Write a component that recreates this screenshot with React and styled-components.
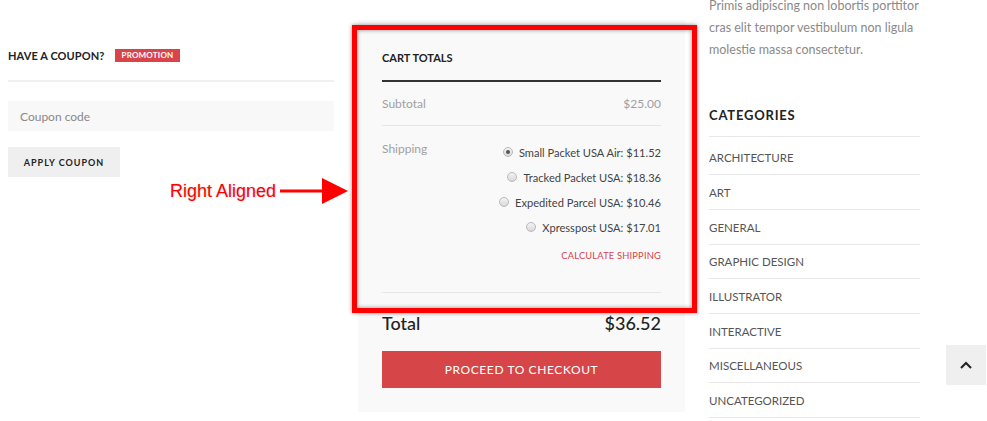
import React from "react";
import styled, { createGlobalStyle } from "styled-components";

const Global = createGlobalStyle`
  html, body { margin: 0; padding: 0; background: #fff; }
  body { font-family: Lato, "Open Sans", sans-serif; overflow: hidden; }
  * { box-sizing: border-box; }
`;

const Page = styled.div`
  position: relative;
  width: 987px;
  height: 421px;
  overflow: hidden;
  display: flex;
  align-items: flex-start;
  gap: 24px;
  padding-left: 8px;
`;

const LeftCol = styled.div`
  width: 326px;
  display: flex;
  flex-direction: column;
`;

const CouponHeader = styled.div`
  display: flex;
  align-items: center;
  gap: 10px;
  padding: 45px 0 15px;
  border-bottom: 2px solid #f0f0f0;
  height: 82px;
`;

const HeaderTitle = styled.span`
  font-size: 11px;
  font-weight: 700;
  color: #222;
  text-transform: uppercase;
  letter-spacing: 0.1px;
`;

const Badge = styled.span`
  display: inline-flex;
  align-items: center;
  height: 13px;
  padding: 0 7px;
  background: #d9434a;
  color: #fff;
  font-size: 8px;
  font-weight: 700;
  letter-spacing: 0.2px;
`;

const CouponInput = styled.div`
  margin-top: 19px;
  height: 30px;
  background: #f8f8f8;
  display: flex;
  align-items: center;
  padding-left: 12px;
  font-size: 12px;
  color: #888;
`;

const GreyButton = styled.div`
  margin-top: 16px;
  width: 112px;
  height: 30px;
  background: #efefef;
  display: flex;
  align-items: center;
  justify-content: center;
  font-size: 9px;
  font-weight: 700;
  letter-spacing: 1px;
  color: #222;
`;

const Panel = styled.div`
  width: 327px;
  margin-top: 20px;
  background: #f9f9f9;
  padding: 0 24px 24px;
`;

const PanelTitle = styled.div`
  padding: 28px 0 12px;
  line-height: 20px;
  font-size: 11px;
  font-weight: 700;
  color: #222;
  border-bottom: 2px solid #333;
`;

const Row = styled.div`
  display: flex;
  justify-content: space-between;
  align-items: ${(p) => (p.$top ? "flex-start" : "center")};
  min-height: ${(p) => p.$h || 0}px;
  padding: ${(p) => p.$pad || "0"};
  border-bottom: 1px solid #e6e6e6;
  font-size: 12px;
  color: #a0a0a0;
`;

const Label = styled.span`
  line-height: 14px;
`;

const Options = styled.div`
  display: flex;
  flex-direction: column;
  align-items: flex-end;
  gap: 5px;
  padding-top: 1px;
`;

const Option = styled.label`
  display: flex;
  align-items: center;
  gap: 6px;
  line-height: 20px;
  font-size: 11.1px;
  color: #444;
`;

const Radio = styled.span`
  width: 10px;
  height: 10px;
  border-radius: 50%;
  background: linear-gradient(#f4f4f4, #d8d8d8);
  border: 1px solid #b9b9b9;
  display: inline-flex;
  align-items: center;
  justify-content: center;
  margin-top: -3px;
  &::after {
    content: "";
    width: 4px;
    height: 4px;
    border-radius: 50%;
    background: ${(p) => (p.$checked ? "#555" : "transparent")};
  }
`;

const CalcLink = styled.span`
  margin-top: 6px;
  line-height: 14px;
  font-size: 9.3px;
  color: #d9434a;
  letter-spacing: 0.2px;
`;

const TotalRow = styled.div`
  display: flex;
  justify-content: space-between;
  padding-top: 18px;
  line-height: 24px;
  font-size: 18px;
  font-weight: 500;
  color: #222;
`;

const CheckoutButton = styled.div`
  margin-top: 16px;
  height: 37px;
  background: #d64547;
  color: #fff;
  display: flex;
  align-items: center;
  justify-content: center;
  font-size: 12px;
  letter-spacing: 0.6px;
`;

const RightCol = styled.div`
  width: 211px;
  display: flex;
  flex-direction: column;
`;

const Para = styled.p`
  margin: -5px 0 0;
  font-size: 12.5px;
  line-height: 22px;
  color: #8a8a8a;
  white-space: nowrap;
`;

const WidgetTitle = styled.h3`
  margin: 43px 0 0;
  line-height: 22px;
  font-size: 13px;
  font-weight: 700;
  letter-spacing: 0.8px;
  color: #222;
  padding-bottom: 10px;
  border-bottom: 1px solid #e8e8e8;
`;

const CatList = styled.ul`
  list-style: none;
  margin: 3.5px 0 0;
  padding: 0;
`;

const CatItem = styled.li`
  height: 34.7px;
  display: flex;
  align-items: center;
  padding-top: 1px;
  border-bottom: 1px solid #e8e8e8;
  font-size: 11.5px;
  color: #555;
`;

const ScrollTop = styled.div`
  position: absolute;
  left: 946px;
  top: 345px;
  width: 40px;
  height: 40px;
  background: #efefef;
  display: flex;
  align-items: center;
  justify-content: center;
`;

const Highlight = styled.div`
  position: absolute;
  left: 352px;
  top: 25px;
  width: 345px;
  height: 288px;
  border: 5px solid #f00;
  box-shadow: 0 0 4px rgba(0, 0, 0, 0.45), inset 0 0 4px rgba(0, 0, 0, 0.45);
  pointer-events: none;
`;

const Callout = styled.div`
  position: absolute;
  left: 170px;
  top: 177px;
  display: flex;
  align-items: center;
  gap: 4px;
  font-family: "Liberation Sans", Arial, sans-serif;
  font-size: 18px;
  color: #f00;
  text-shadow: 0 0 2px rgba(0, 0, 0, 0.2);
`;

const options = [
  { label: "Small Packet USA Air: $11.52", checked: true },
  { label: "Tracked Packet USA: $18.36" },
  { label: "Expedited Parcel USA: $10.46" },
  { label: "Xpresspost USA: $17.01" },
];

const cats = [
  "ARCHITECTURE",
  "ART",
  "GENERAL",
  "GRAPHIC DESIGN",
  "ILLUSTRATOR",
  "INTERACTIVE",
  "MISCELLANEOUS",
  "UNCATEGORIZED",
];

export default function App() {
  return (
    <>
      <Global />
      <Page>
        <LeftCol>
          <CouponHeader>
            <HeaderTitle>Have a coupon?</HeaderTitle>
            <Badge>PROMOTION</Badge>
          </CouponHeader>
          <CouponInput>Coupon code</CouponInput>
          <GreyButton>APPLY COUPON</GreyButton>
        </LeftCol>

        <Panel>
          <PanelTitle>CART TOTALS</PanelTitle>
          <Row $h={44}>
            <Label>Subtotal</Label>
            <Label>$25.00</Label>
          </Row>
          <Row $top $pad="16px 0 29px">
            <Label>Shipping</Label>
            <Options>
              {options.map((o) => (
                <Option key={o.label}>
                  <Radio $checked={o.checked} />
                  {o.label}
                </Option>
              ))}
              <CalcLink>CALCULATE SHIPPING</CalcLink>
            </Options>
          </Row>
          <TotalRow>
            <span>Total</span>
            <span>$36.52</span>
          </TotalRow>
          <CheckoutButton>PROCEED TO CHECKOUT</CheckoutButton>
        </Panel>

        <RightCol>
          <Para>
            Primis adipiscing non lobortis porttitor
            <br />
            cras elit tempor vestibulum non ligula
            <br />
            molestie massa consectetur.
          </Para>
          <WidgetTitle>CATEGORIES</WidgetTitle>
          <CatList>
            {cats.map((c) => (
              <CatItem key={c}>{c}</CatItem>
            ))}
          </CatList>
        </RightCol>

        <Highlight />
        <Callout>
          <span>Right Aligned</span>
          <svg width="70" height="28" viewBox="0 0 70 28">
            <rect x="0" y="12.5" width="46" height="3" fill="#f00" />
            <polygon points="42,1 68,14 42,27" fill="#f00" />
          </svg>
        </Callout>
        <ScrollTop>
          <svg width="14" height="10" viewBox="0 0 14 10">
            <polyline points="2,8 7,3 12,8" fill="none" stroke="#222" strokeWidth="2" />
          </svg>
        </ScrollTop>
      </Page>
    </>
  );
}
